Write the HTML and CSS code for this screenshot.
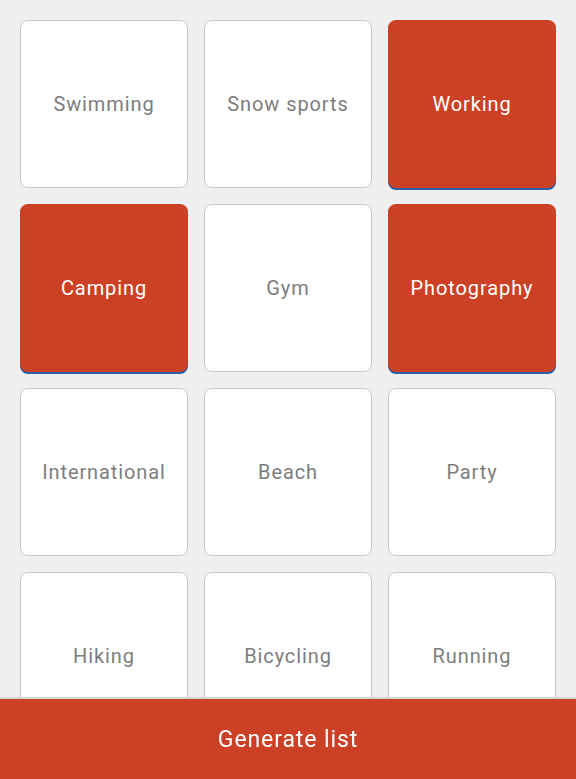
FILE: index.html
```html
<!DOCTYPE html>
<html>
<head>
<meta charset="utf-8">
<link rel="stylesheet" href="styles.css">
</head>
<body>
<div class="grid">
  <div class="tile">Swimming</div>
  <div class="tile">Snow sports</div>
  <div class="tile selected">Working</div>
  <div class="tile selected">Camping</div>
  <div class="tile">Gym</div>
  <div class="tile selected">Photography</div>
  <div class="tile">International</div>
  <div class="tile">Beach</div>
  <div class="tile">Party</div>
  <div class="tile">Hiking</div>
  <div class="tile">Bicycling</div>
  <div class="tile">Running</div>
</div>
<div class="bar">Generate list</div>
</body>
</html>
```
FILE: styles.css
```css
html, body {
  margin: 0;
  padding: 0;
  background: #efefef;
  font-family: Roboto, "Liberation Sans", sans-serif;
}
.grid {
  display: grid;
  grid-template-columns: repeat(3, 168px);
  grid-auto-rows: 168px;
  gap: 16px;
  padding: 20px;
}
.tile {
  box-sizing: border-box;
  background: #fff;
  border: 1px solid #c8c8c8;
  border-radius: 8px;
  display: flex;
  align-items: center;
  justify-content: center;
  font-size: 20px;
  letter-spacing: 0.9px;
  color: #7d7d7d;
}
.tile.selected {
  background: #cc4125;
  border: none;
  color: #fff;
  box-shadow: 0 2px 0 #2d5ea8;
}
.bar {
  position: fixed;
  left: 0;
  right: 0;
  bottom: 0;
  height: 80px;
  background: #cc4125;
  color: #fff;
  font-size: 23px;
  letter-spacing: 0.9px;
  display: flex;
  align-items: center;
  justify-content: center;
  box-shadow: 0 -2px 0 #d6d6d6;
}
```
